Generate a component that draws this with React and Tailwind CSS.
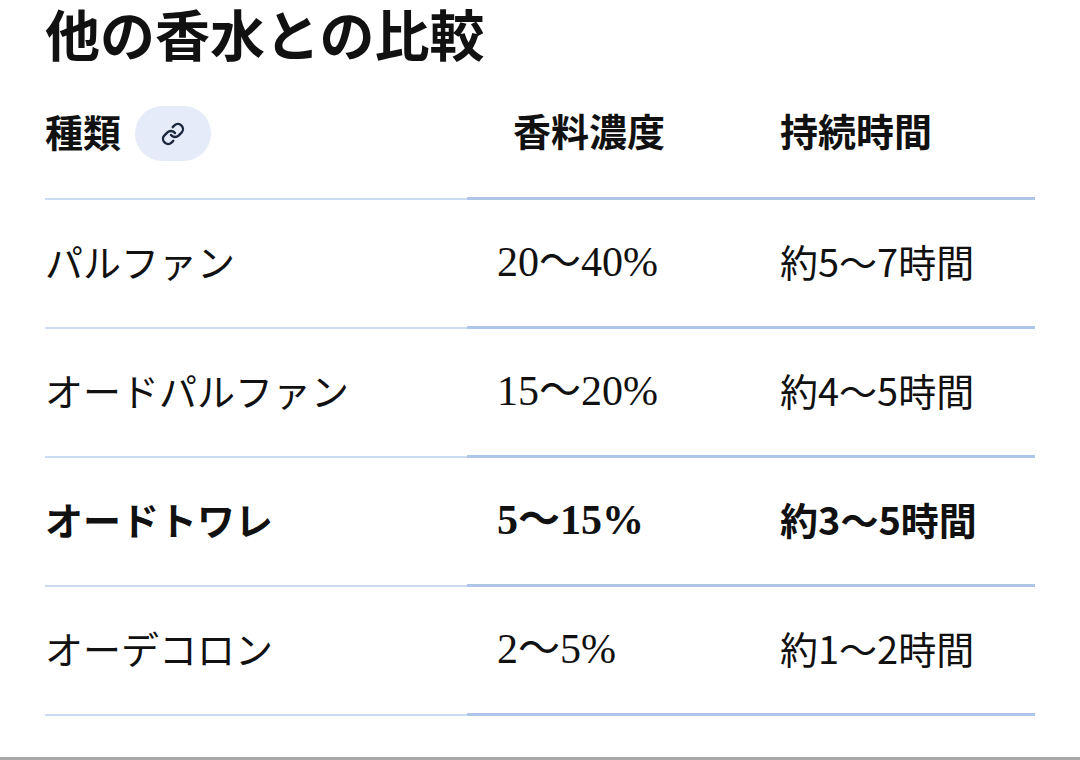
import React from "react";
import { Link } from "lucide-react";

const rows = [
  { name: "パルファン", conc: "20〜40%", dur: "約5〜7時間", bold: false },
  { name: "オードパルファン", conc: "15〜20%", dur: "約4〜5時間", bold: false },
  { name: "オードトワレ", conc: "5〜15%", dur: "約3〜5時間", bold: true },
  { name: "オーデコロン", conc: "2〜5%", dur: "約1〜2時間", bold: false },
];

export default function App() {
  return (
    <div className="w-[1080px] h-[760px] bg-white flex flex-col text-[#111] overflow-hidden">
      <div className="h-[757px] px-[45px]">
        <div className="h-[71px] flex items-start">
          <h1 className="text-[55px] leading-[64px] font-bold font-['Noto_Sans_CJK_JP',sans-serif]">
            他の香水との比較
          </h1>
        </div>
        <div className="grid grid-cols-[422px_283px_285px]">
          <div className="h-[129px] flex items-center gap-[14px] border-b-2 border-[#cddbf2] font-['Noto_Sans_CJK_JP',sans-serif] font-bold text-[38px]">
            <span className="pb-[9px]">種類</span>
            <span className="w-[76px] h-[55px] mb-[2px] rounded-full bg-[#e5ebf8] flex items-center justify-center">
              <Link className="w-[24px] h-[24px] text-[#1c2740]" strokeWidth={2.4} />
            </span>
          </div>
          <div className="h-[129px] flex items-center pl-[46px] pb-[9px] border-b-[3px] border-[#aec6ea] font-['Noto_Sans_CJK_JP',sans-serif] font-bold text-[38px]">
            香料濃度
          </div>
          <div className="h-[129px] flex items-center pl-[30px] pb-[9px] border-b-[3px] border-[#aec6ea] font-['Noto_Sans_CJK_JP',sans-serif] font-bold text-[38px]">
            持続時間
          </div>
          {rows.map((r) => (
            <React.Fragment key={r.name}>
              <div
                className={
                  "h-[129px] flex items-center pb-[6px] border-b-2 border-[#cddbf2] font-['Noto_Sans_CJK_JP',sans-serif] text-[38px] " +
                  (r.bold ? "font-bold" : "font-normal")
                }
              >
                {r.name}
              </div>
              <div
                className={
                  "h-[129px] flex items-center pl-[30px] pb-[1px] border-b-[3px] border-[#aec6ea] text-[42px] font-['Liberation_Serif','Noto_Sans_CJK_JP',serif] " +
                  (r.bold ? "font-bold" : "font-normal")
                }
              >
                {r.conc}
              </div>
              <div
                className={
                  "h-[129px] flex items-center pl-[30px] pb-[6px] border-b-[3px] border-[#aec6ea] text-[38px] font-['Noto_Sans_CJK_JP',sans-serif] " +
                  (r.bold ? "font-bold" : "font-normal")
                }
              >
                {r.dur}
              </div>
            </React.Fragment>
          ))}
        </div>
      </div>
      <div className="h-[3px] bg-[#a8a8a8]" />
    </div>
  );
}
